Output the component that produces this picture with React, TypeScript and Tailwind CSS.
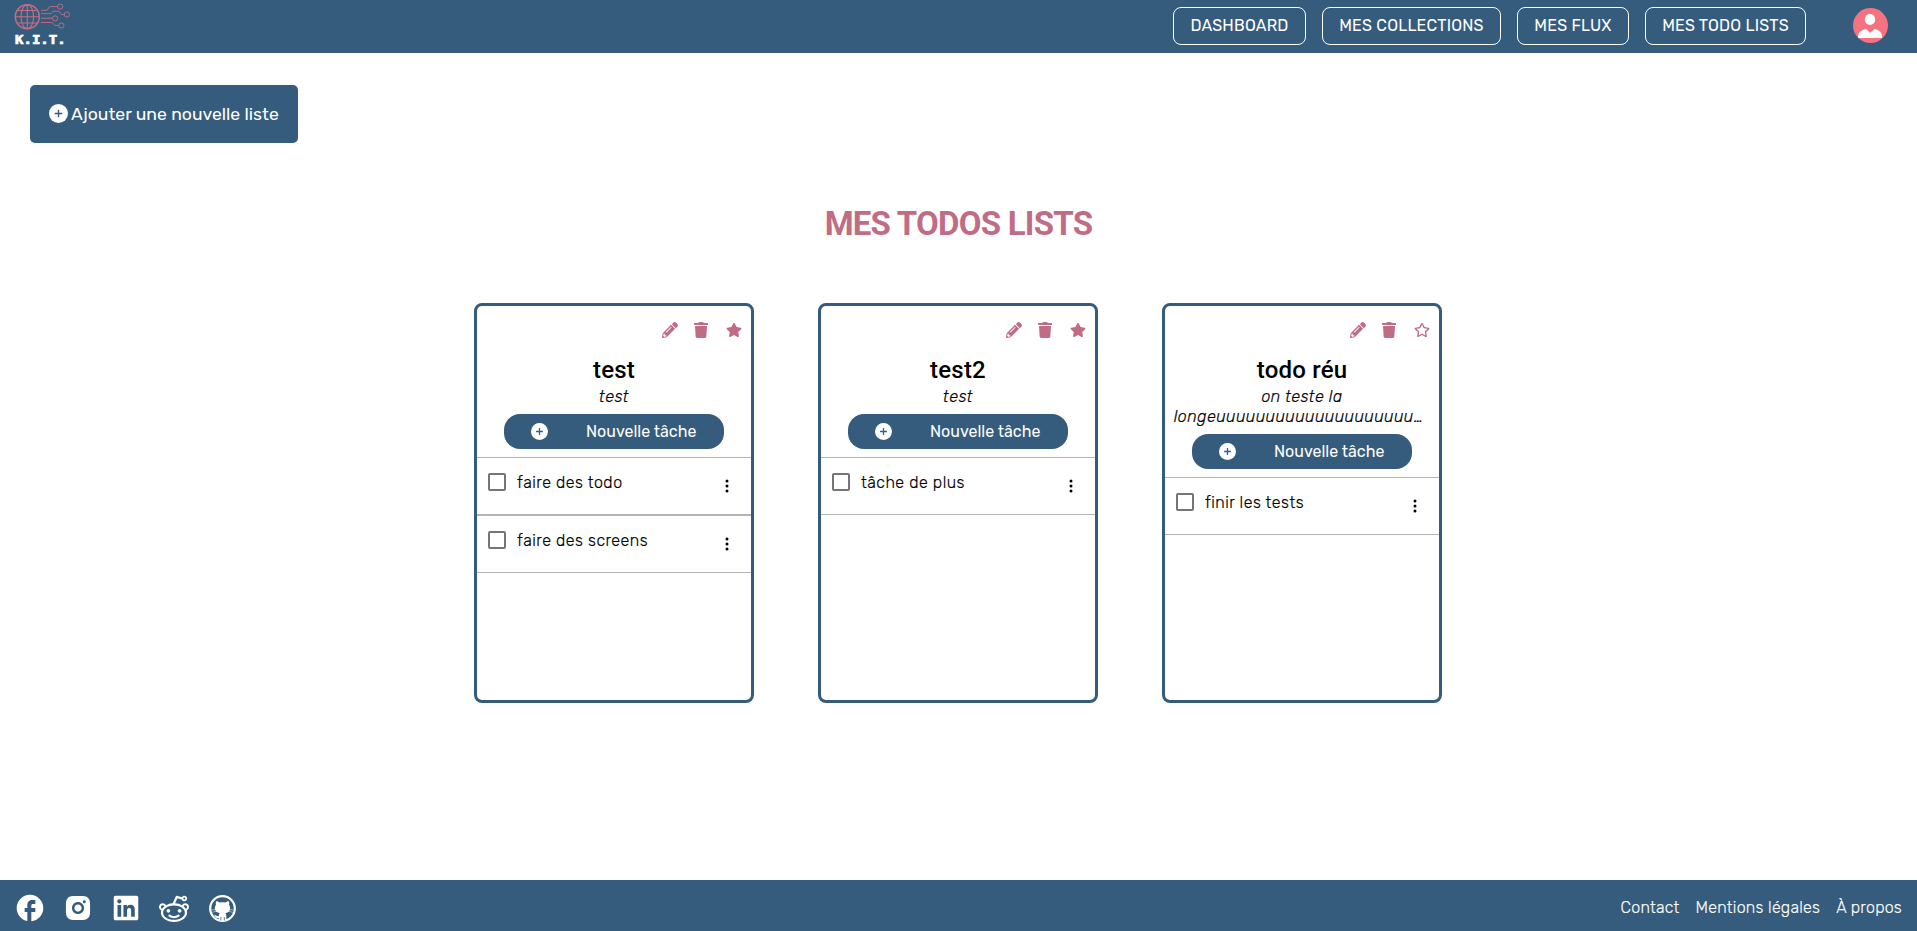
import { FaPencilAlt, FaTrash, FaStar, FaRegStar, FaLinkedin } from "react-icons/fa";
import { BsThreeDotsVertical } from "react-icons/bs";
import { MdFacebook } from "react-icons/md";
import { RiInstagramFill } from "react-icons/ri";
import { ImReddit } from "react-icons/im";

type Todo = {
  title: string;
  lines: string[];
  starred: boolean;
  tasks: string[];
};

const todos: Todo[] = [
  { title: "test", lines: ["test"], starred: true, tasks: ["faire des todo", "faire des screens"] },
  { title: "test2", lines: ["test"], starred: true, tasks: ["tâche de plus"] },
  {
    title: "todo réu",
    lines: ["on teste la", "longe" + "u".repeat(20) + "…"],
    starred: false,
    tasks: ["finir les tests"],
  },
];

const nav = [
  { label: "DASHBOARD", className: "w-[133px]" },
  { label: "MES COLLECTIONS", className: "w-[179px]" },
  { label: "MES FLUX", className: "w-[112px]" },
  { label: "MES TODO LISTS", className: "w-[161px]" },
];

function PlusCircle({ className }: { className: string }) {
  return (
    <svg viewBox="0 0 20 20" className={className}>
      <circle cx="10" cy="10" r="10" fill="#fff" />
      <path d="M10 6v8M6 10h8" stroke="#355c7d" strokeWidth="1.5" />
    </svg>
  );
}

function Logo() {
  return (
    <div className="flex w-[58px] flex-col pt-[3px]">
      <svg viewBox="0 0 58 28" className="h-[28px] w-[58px]" fill="none" stroke="#c96c84" strokeWidth="1.1">
        <circle cx="14.3" cy="13.7" r="12" strokeWidth="1.5" />
        <ellipse cx="14.3" cy="13.7" rx="6.3" ry="12" />
        <path d="M14.3 1.7v24M2.3 13.7h24M4.3 7.5h20M4.3 20h20" />
        <g strokeWidth="0.9">
          <path d="M28 7.3h6l2.5-3.7h8M28 10.7h10l2-2.5h6l2.5 3.3h3M28 15.2h11.5M28 19.5h11l3 3h3.5" />
          <circle cx="47.2" cy="3.6" r="2.6" />
          <circle cx="53.9" cy="11.5" r="2.6" />
          <circle cx="42.1" cy="15.4" r="2.6" />
          <circle cx="48.4" cy="22.5" r="2.6" />
        </g>
      </svg>
      <span className="flex h-[18px] items-end pl-[1.5px] font-['DejaVu_Sans_Mono',monospace] text-[11.5px] leading-[17px] font-bold text-white">
        <span className="inline-block origin-left scale-x-[1.22] whitespace-nowrap [-webkit-text-stroke:0.7px_white]">
          K.I.T.
        </span>
      </span>
    </div>
  );
}

function Avatar() {
  return (
    <svg viewBox="0 0 35 35" className="h-[35px] w-[35px]">
      <circle cx="17.5" cy="17.5" r="17.5" fill="#f67280" />
      <ellipse cx="17" cy="11.4" rx="5.2" ry="5.6" fill="#fff" />
      <path d="M5 30c0-5 2.2-7.8 8-9l4.2 3.8L21.5 21c5.5 1.2 7.7 4 7.7 9z" fill="#fff" />
    </svg>
  );
}

function GithubBadge() {
  return (
    <svg viewBox="0 0 27 27" className="h-[27px] w-[27px]">
      <circle cx="13.5" cy="13.5" r="12.3" fill="none" stroke="#fff" strokeWidth="2.2" />
      <path
        fill="#fff"
        d="M7.2 6.2c1.3 0 2.7.7 3.7 1.4 1.7-.4 3.5-.4 5.2 0 1-.7 2.4-1.4 3.7-1.4.5 1.3.5 2.5.2 3.5.9 1.1 1.3 2.3 1.2 3.6-.2 3-1.9 4.4-4.7 4.9.6.7.8 1.5.8 2.5v4.8h-7.6v-2.6c-2.6.4-3.1-.7-3.7-1.8-.3-.5-.7-.9-1.2-1.3 1.8-.5 2.4 1.8 4.9 1.5.1-1.3.4-2.4 1-3.1-2.8-.5-4.7-1.900-4.900-4.900-.1-1.300.3-2.500 1.200-3.600-.3-1-.3-2.200.2-3.500z"
      />
      <path
        d="M2.5 15l4.5-.6M3.2 17.4l4.3-1.3M24.5 15l-4.5-.6M23.8 17.4l-4.3-1.3"
        stroke="#fff"
        strokeWidth="0.7"
        strokeOpacity="0.75"
      />
      <path d="M11.9 22v3.5M15.3 22v3.5" stroke="#355c7d" strokeWidth="0.8" />
    </svg>
  );
}

function TodoCard({ todo }: { todo: Todo }) {
  return (
    <article className="flex h-[400px] w-[280px] flex-col rounded-lg border-3 border-[#355c7d] bg-white">
      <div className="flex h-[49px] shrink-0 items-end justify-end pr-[9px] pb-[17px] text-base text-[#c06c84]">
        <FaPencilAlt />
        <FaTrash className="ml-[15px]" />
        {todo.starred ? <FaStar className="ml-[17px]" /> : <FaRegStar className="ml-[17px]" />}
      </div>
      <h2 className="text-center font-[Roboto,sans-serif] text-2xl leading-[30px] font-medium tracking-[0.2px]">
        {todo.title}
      </h2>
      <div className="flex flex-col items-center pt-[2px] text-base leading-5 font-light tracking-[0.5px] whitespace-nowrap italic [-webkit-text-stroke:0.2px_black]">
        {todo.lines.map((line) => (
          <p key={line} className={line.length > 20 ? "mr-[7px]" : ""}>
            {line}
          </p>
        ))}
      </div>
      <button className="mx-auto mt-[7px] flex h-[35px] w-[220px] shrink-0 items-center rounded-[16px] bg-[#355c7d] pl-[27px] text-white">
        <PlusCircle className="h-[17px] w-[17px]" />
        <span className="ml-[38px] text-base leading-5">Nouvelle tâche</span>
      </button>
      <ul className="mt-2">
        {todo.tasks.map((task) => (
          <li key={task} className="flex h-[58px] items-start border-y border-[#b4b4b4] pt-[15px] pl-[11px]">
            <span className="h-[18px] w-[18px] rounded-[2px] border-2 border-[#757575]" />
            <span className="ml-[11px] grow text-base leading-[19px] font-light tracking-[0.5px] [-webkit-text-stroke:0.2px_black]">
              {task}
            </span>
            <BsThreeDotsVertical className="mt-[5px] mr-[16px] h-4 w-4" />
          </li>
        ))}
      </ul>
    </article>
  );
}

export default function App() {
  return (
    <div className="flex h-[931px] flex-col bg-white font-[Rubik,Roboto,sans-serif] text-black">
      <header className="flex h-[53px] shrink-0 items-start justify-between bg-[#355c7d] pr-[29px] pl-[13px]">
        <Logo />
        <div className="flex items-start pt-[7px]">
          <nav className="flex gap-4">
            {nav.map((item) => (
              <a
                key={item.label}
                className={
                  "flex h-[38px] items-center justify-center rounded-lg border border-white text-base tracking-[0.2px] whitespace-nowrap text-white " +
                  item.className
                }
              >
                {item.label}
              </a>
            ))}
          </nav>
          <div className="ml-[47px] pt-px">
            <Avatar />
          </div>
        </div>
      </header>

      <main className="flex grow flex-col">
        <button className="mt-8 ml-[30px] flex h-[58px] w-[268px] items-center rounded-[5px] bg-[#355c7d] pl-[19px] text-white">
          <PlusCircle className="mb-px h-[19px] w-[19px]" />
          <span className="ml-[3px] text-[17.6px] whitespace-nowrap">Ajouter une nouvelle liste</span>
        </button>
        <h1 className="mt-[61px] text-center font-[Roboto,sans-serif] text-[33px] leading-[40px] font-bold tracking-[-0.75px] text-[#c06c84]">
          MES TODOS LISTS
        </h1>
        <section className="mt-[59px] flex justify-center gap-16 pr-px">
          {todos.map((todo) => (
            <TodoCard key={todo.title} todo={todo} />
          ))}
        </section>
      </main>

      <footer className="flex h-[51px] shrink-0 items-center justify-between bg-[#355c7d] pt-[5px] pr-[15px] pl-[14px] text-white">
        <div className="flex items-center gap-4 text-[32px]">
          <MdFacebook />
          <RiInstagramFill className="p-[1.5px]" />
          <FaLinkedin className="p-[2px]" />
          <ImReddit className="mb-[3px] p-px" />
          <span className="flex h-8 w-8 items-center justify-center">
            <GithubBadge />
          </span>
        </div>
        <div className="flex gap-4 text-base font-light tracking-[0.25px] [-webkit-text-stroke:0.15px_white]">
          <a>Contact</a>
          <a>Mentions légales</a>
          <a>À propos</a>
        </div>
      </footer>
    </div>
  );
}
